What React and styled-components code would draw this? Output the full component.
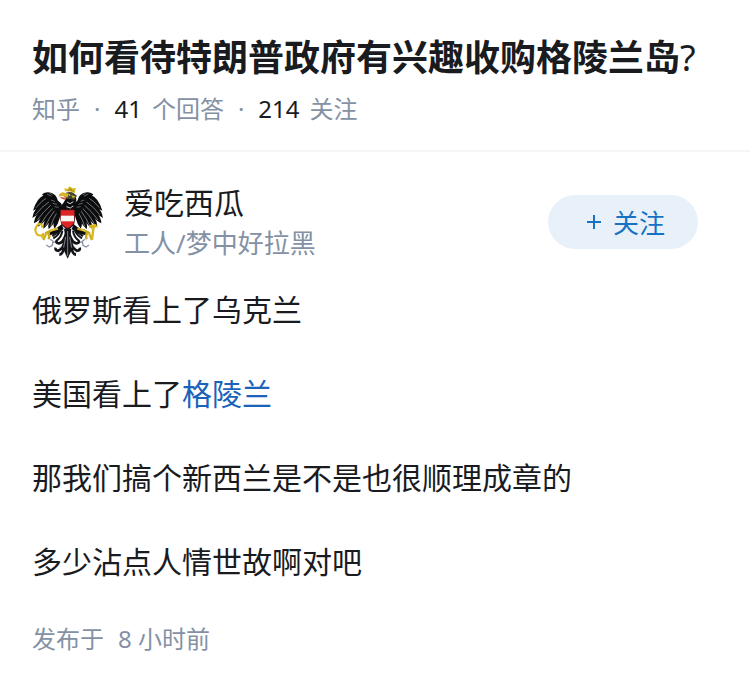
import React from "react";
import styled, { createGlobalStyle } from "styled-components";

const GlobalStyle = createGlobalStyle`
  * { box-sizing: border-box; }
  body {
    margin: 0;
    background: #ffffff;
    color: #191b1f;
    font-family: "Noto Sans", "Noto Sans CJK SC", sans-serif;
  }
`;

const Header = styled.header`
  padding: 32px 32px 24px;
  border-bottom: 2px solid #f4f5f6;
`;

const Title = styled.h1`
  margin: 0;
  font-size: 36px;
  line-height: 52px;
  font-weight: 700;
`;

const TitleMark = styled.span`
  font-weight: 400;
`;

const Meta = styled.div`
  display: flex;
  gap: 10px;
  margin-top: 8px;
  font-size: 24px;
  line-height: 34px;
  color: #8491a5;
`;

const Dot = styled.span`
  padding: 0 4px;
`;

const Count = styled.span`
  color: #191b1f;
`;

const Answer = styled.article`
  padding: 30px 32px 32px;
`;

const Author = styled.div`
  display: flex;
  align-items: center;
  padding-right: 20px;
`;

const Avatar = styled.svg`
  width: 72px;
  height: 74px;
  flex: none;
`;

const Identity = styled.div`
  flex: 1;
  margin-left: 20px;
`;

const Name = styled.div`
  font-size: 30px;
  line-height: 42px;
`;

const Bio = styled.div`
  font-size: 26px;
  line-height: 38px;
  color: #8491a5;
`;

const FollowButton = styled.button`
  display: flex;
  align-items: center;
  justify-content: center;
  gap: 12px;
  width: 150px;
  height: 54px;
  padding: 0 0 0 6px;
  border: 0;
  border-radius: 27px;
  background: #e8f1fa;
  color: #1772c4;
  font: inherit;
  font-size: 26px;
  cursor: pointer;
`;

const PlusIcon = styled.svg`
  width: 14px;
  height: 14px;
`;

const Body = styled.div`
  display: grid;
  gap: 36px;
  margin-top: 24px;
  font-size: 30px;
  line-height: 48px;
`;

const Paragraph = styled.p`
  margin: 0;
`;

const TopicLink = styled.a`
  color: #1b63b8;
  text-decoration: none;
`;

const Published = styled.footer`
  display: flex;
  gap: 14px;
  margin-top: 36px;
  font-size: 24px;
  line-height: 34px;
  color: #8491a5;
`;

const feathers = [
  "M88 52 Q62 54 48 72 Q38 86 33 104 Q48 98 62 84 L96 66Z",
  "M84 66 Q54 80 42 98 Q32 112 31 126 Q46 118 62 102 L98 80Z",
  "M88 76 Q58 96 48 112 Q36 128 36 142 Q50 136 66 118 L102 90Z",
  "M92 84 Q66 108 57 124 Q48 138 48 152 Q62 144 76 126 L106 96Z",
  "M98 92 Q76 116 69 132 Q62 146 64 158 Q76 150 88 130 L110 102Z",
  "M102 98 Q86 122 81 138 Q77 150 80 160 Q92 150 100 132 L114 106Z",
  "M108 104 Q96 128 94 142 Q94 152 98 158 Q108 146 112 130 L117 112Z",
];

const quills = [
  "M82 60 Q58 74 42 95",
  "M84 75 Q56 95 41 116",
  "M88 86 Q62 109 46 132",
  "M94 95 Q69 120 57 143",
  "M99 102 Q80 128 71 149",
  "M105 109 Q91 133 86 151",
];

function Wing() {
  return (
    <g>
      {feathers.map((d) => (
        <path key={d} d={d} fill="#0b0c0e" />
      ))}
      {quills.map((d) => (
        <path key={d} d={d} fill="none" stroke="#a7aaae" strokeWidth="2" />
      ))}
      <path
        d="M60 55 Q74 44 91 52 Q104 58 107 73 L119 84 L121 108 L108 118 L92 98 L79 75Z"
        fill="#0b0c0e"
      />
      <path
        d="M75 54l13 7m-7-11l11 7m-5 15l11 4m-6 6l13 3m-7 7l12 2"
        fill="none"
        stroke="#8c8e91"
        strokeWidth="2"
      />
    </g>
  );
}

function Leg() {
  return (
    <g>
      <path d="M119 145 L101 158 L82 168 L84 177 L106 174 L125 159Z" fill="#0b0c0e" />
      <path
        d="M108 158 L88 163 L70 172 M78 168 L70 178 L64 192 M76 168 L82 179 L80 190"
        fill="none"
        stroke="#caa81c"
        strokeWidth="7"
      />
      <path d="M98 159l-12 6m-10 7l-4 8" fill="none" stroke="#f0d94e" strokeWidth="3" />
      <path
        d="M85 190 l8 6 l-2 12 l-9 5 l-9-6 M92 200 l14-4"
        fill="none"
        stroke="#8993a4"
        strokeWidth="4"
      />
      <path
        d="M116 160 Q111 178 94 187 M121 164 Q119 184 102 195 M106 169 L91 181"
        fill="none"
        stroke="#15171a"
        strokeWidth="6"
      />
    </g>
  );
}

function EagleAvatar() {
  return (
    <Avatar viewBox="30 27 216 222" role="img" aria-label="爱吃西瓜">
      <Wing />
      <g transform="translate(274 0) scale(-1 1)">
        <Wing />
      </g>
      <path
        d="M134 63 L126 78 L119 88 L113 107 L119 147 L137 164 L156 147 L162 106 L154 91 Q168 76 160 60Z"
        fill="#0b0c0e"
      />
      <path
        d="M135 78 l9 5 l10-6 m-21 15 l12 4 l8-6"
        fill="none"
        stroke="#d1d3d5"
        strokeWidth="3"
      />
      <Leg />
      <g transform="translate(274 0) scale(-1 1)">
        <Leg />
      </g>
      <path
        d="M126 158 L148 158 L145 186 L150 220 L137 248 L124 220 L130 187Z"
        fill="#111317"
      />
      <path
        d="M132 174 Q124 200 111 202 Q101 202 104 194 M142 174 Q150 200 163 202 Q173 202 170 194 M130 186 Q125 219 109 224 Q98 224 101 215 M144 186 Q149 219 165 224 Q176 224 173 215 M128 204 Q124 236 112 236 M146 204 Q150 236 162 236"
        fill="none"
        stroke="#111317"
        strokeWidth="8"
      />
      <path
        d="M137 165 V240 M131 183 L125 215 M143 183 L149 215 M119 211 l-9 5 M155 211 l9 5 M116 228 l-7 3 M158 228 l7 3"
        fill="none"
        stroke="#aeb6c2"
        strokeWidth="2"
      />
      <path
        d="M116 102 H157 V132 Q156 149 137 157 Q118 149 116 132Z"
        fill="#dd2426"
        stroke="#811c1c"
        strokeWidth="2"
      />
      <path d="M117 119 H156 V136 H117Z" fill="#f5f5f2" />
      <path d="M124 58 Q133 45 151 49 L165 59 L157 72 L147 69 L134 69Z" fill="#42422c" />
      <path d="M141 53 L122 49 Q110 52 110 62 Q121 57 136 65Z" fill="#d7b32a" />
      <path d="M133 65 L113 63 L119 68 L129 71Z" fill="#d94b35" />
      <path
        d="M129 46 L127 36 L136 39 L143 31 L151 37 L162 36 L158 52 Q143 44 129 46Z"
        fill="#dfbd29"
      />
      <path d="M135 43 Q147 39 157 47 M142 36 l9 6" fill="none" stroke="#7c701d" strokeWidth="2" />
      <path d="M148 57 L162 62 L152 66Z" fill="#c5b83c" />
      <circle cx="143" cy="57" r="2" fill="#ffffff" />
      <path
        d="M50 143 Q62 143 60 155 M50 143 Q33 160 45 175 Q57 184 66 171 M64 173 L60 186"
        fill="none"
        stroke="#d9b61c"
        strokeWidth="6"
      />
      <path d="M202 147 L222 144 L227 154 L203 156Z" fill="#d9b61c" />
      <path d="M215 150 L210 191" stroke="#d9b61c" strokeWidth="7" />
    </Avatar>
  );
}

export default function App() {
  return (
    <>
      <GlobalStyle />
      <main lang="zh-CN">
        <Header>
          <Title>
            如何看待特朗普政府有兴趣收购格陵兰岛<TitleMark>?</TitleMark>
          </Title>
          <Meta>
            <span>知乎</span>
            <Dot>·</Dot>
            <Count>41</Count>
            <span>个回答</span>
            <Dot>·</Dot>
            <Count>214</Count>
            <span>关注</span>
          </Meta>
        </Header>
        <Answer>
          <Author>
            <EagleAvatar />
            <Identity>
              <Name>爱吃西瓜</Name>
              <Bio>工人/梦中好拉黑</Bio>
            </Identity>
            <FollowButton type="button">
              <PlusIcon viewBox="0 0 14 14" aria-hidden="true">
                <path d="M7 0V14M0 7H14" stroke="currentColor" strokeWidth="2" />
              </PlusIcon>
              关注
            </FollowButton>
          </Author>
          <Body>
            <Paragraph>俄罗斯看上了乌克兰</Paragraph>
            <Paragraph>
              美国看上了<TopicLink href="#greenland">格陵兰</TopicLink>
            </Paragraph>
            <Paragraph>那我们搞个新西兰是不是也很顺理成章的</Paragraph>
            <Paragraph>多少沾点人情世故啊对吧</Paragraph>
          </Body>
          <Published>
            <span>发布于</span>
            <time>8 小时前</time>
          </Published>
        </Answer>
      </main>
    </>
  );
}
